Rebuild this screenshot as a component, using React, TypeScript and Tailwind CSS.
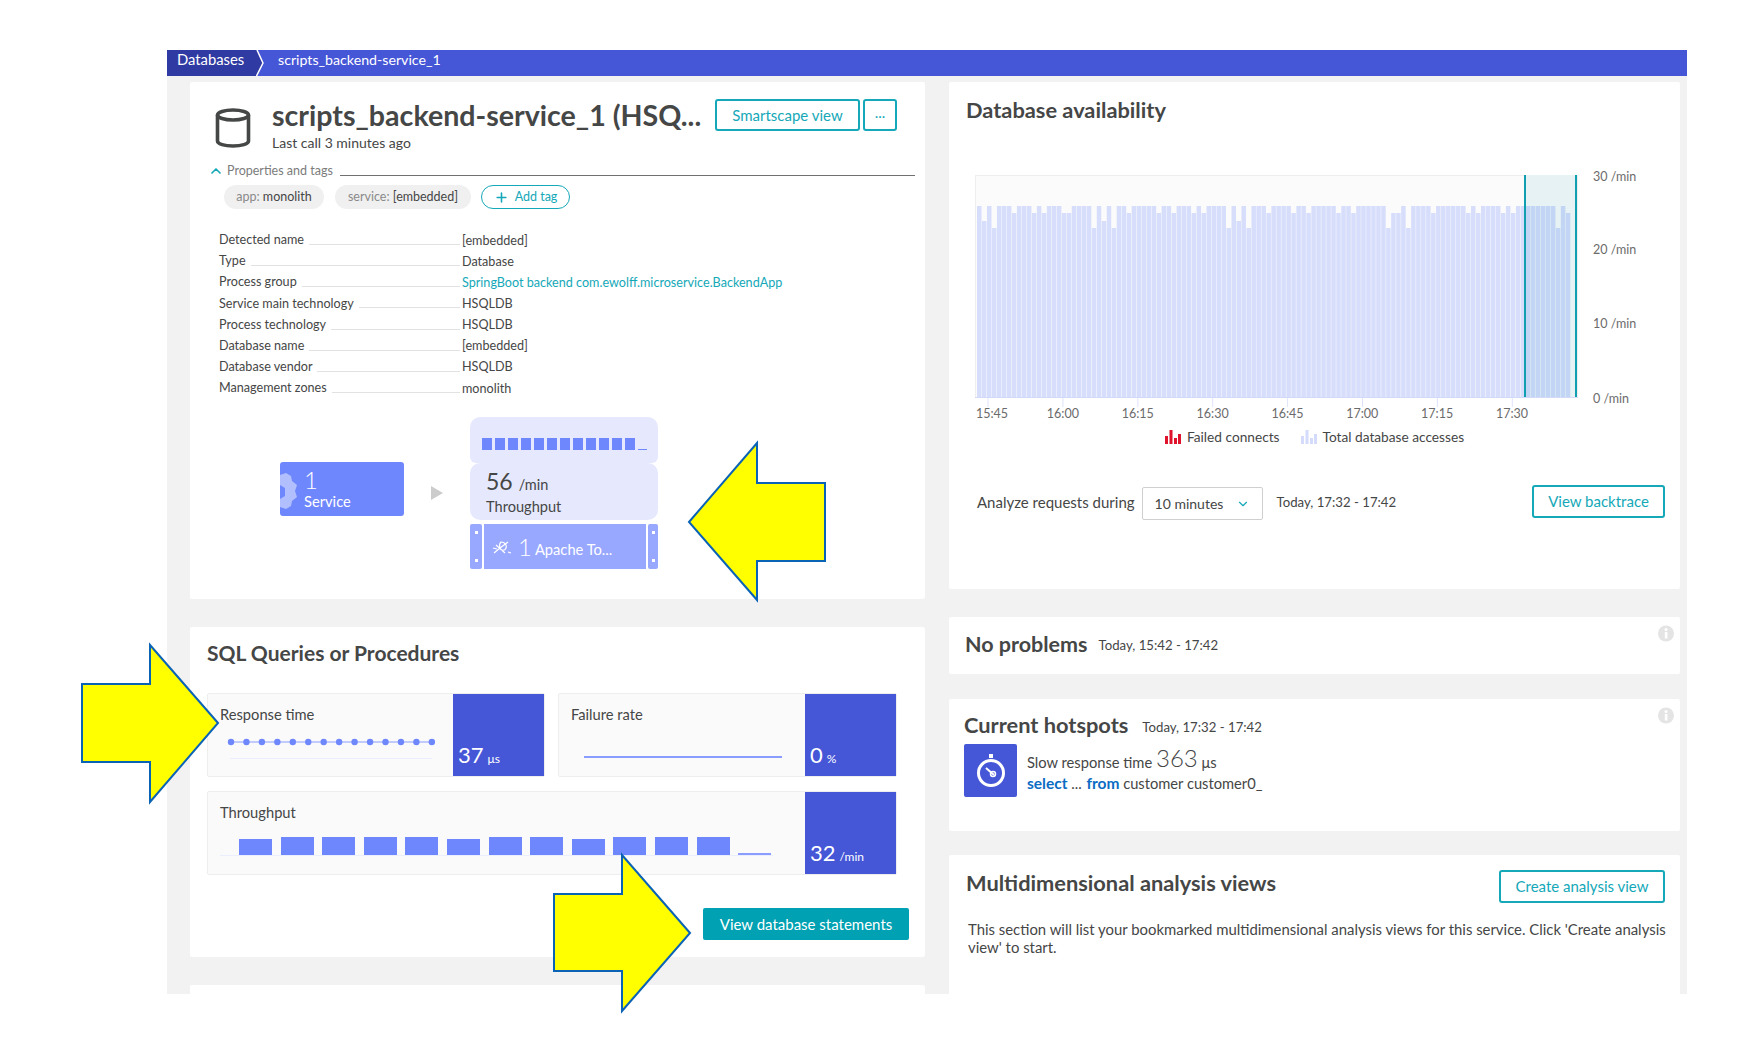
import React from "react";
import { ChevronDown, ChevronUp, Plus } from "lucide-react";

const font = "font-['Lato','Liberation_Sans',sans-serif]";

// Bars that dip below the usual height: index -> top y offset
const dips: Record<number, number> = {
    1: 15, 3: 22, 7: 7, 11: 7, 13: 7, 17: 7, 18: 7, 23: 22, 25: 15, 27: 22, 30: 7, 36: 7, 39: 7,
    43: 7, 45: 7, 50: 22, 52: 15, 54: 22, 58: 7, 63: 7, 66: 7, 72: 7, 75: 7, 82: 22, 83: 7, 84: 7,
    86: 22, 91: 7, 98: 7, 100: 7, 105: 7, 107: 7, 116: 22, 118: 7,
};

const properties: [string, string, boolean?][] = [
    ["Detected name", "[embedded]"],
    ["Type", "Database"],
    ["Process group", "SpringBoot backend com.ewolff.microservice.BackendApp", true],
    ["Service main technology", "HSQLDB"],
    ["Process technology", "HSQLDB"],
    ["Database name", "[embedded]"],
    ["Database vendor", "HSQLDB"],
    ["Management zones", "monolith"],
];

const Arrow = ({ points, box }: { points: string; box: string }) => (
    <svg className={box} viewBox="0 0 1745 1062" width={1745} height={1062}>
        <polygon points={points} fill="#ffff00" stroke="#0b63b5" strokeWidth={2} />
    </svg>
);

const OutlineButton = ({ children, className }: { children: React.ReactNode; className: string }) => (
    <button className={`border-2 border-[#14a8b8] rounded-[3px] text-[#14a8b8] text-[15px] bg-white flex items-center justify-center ${className}`}>
        {children}
    </button>
);

const Tile = ({ label, value, unit, className, children }: {
    label: string; value: string; unit: string; className: string; children: React.ReactNode;
}) => (
    <div className={`h-[84px] flex bg-[#fafafa] border border-[#eeeeee] rounded-[2px] ${className}`}>
        <div className="flex-1 pl-[12px] pt-[11px] relative">
            <div className="text-[14.7px] leading-[18px] text-[#454646]">{label}</div>
            {children}
        </div>
        <div className="w-[91px] bg-[#4556d7] text-white pl-[5px] flex items-end pb-[5px]">
            <span className="text-[22px] leading-[32px]">{value}</span>
            <span className="text-[12px] ml-[4px] leading-[24px]">{unit}</span>
        </div>
    </div>
);

const InfoIcon = () => (
    <svg width="16" height="17" viewBox="0 0 16 17" className="absolute right-[6px] top-[8px]">
        <circle cx="8" cy="8.5" r="8" fill="#e4e4e4" />
        <rect x="6.8" y="7" width="2.6" height="6.5" fill="#fff" />
        <circle cx="8" cy="4.6" r="1.5" fill="#fff" />
    </svg>
);

const AvailabilityChart = () => {
    const ticks = ["15:45", "16:00", "16:15", "16:30", "16:45", "17:00", "17:15", "17:30"];
    return (
        <svg width="700" height="290" viewBox="0 -8 700 290" className="block">
            <rect x="10.5" y="0.5" width="602" height="222" fill="#fbfbfb" stroke="#eeeeee" />
            <rect x="559" y="0" width="52" height="222" fill="#e6f2f3" />
            {Array.from({ length: 119 }, (_, i) => {
                const x = 12 + i * 4.99;
                const top = 31 + (dips[i] ?? 0);
                return <rect key={i} x={x} y={top} width={4.5} height={222 - top} fill={x > 559 ? "#c2d5f5" : "#d7defc"} />;
            })}
            <rect x="559" y="0" width="2" height="222" fill="#0f9fb0" />
            <rect x="610" y="0" width="2" height="222" fill="#0f9fb0" />
            <line x1="10" y1="222.5" x2="613" y2="222.5" stroke="#d3daf7" />
            {ticks.map((t, i) => (
                <g key={t}>
                    <line x1={23 + i * 74.9} y1="223" x2={23 + i * 74.9} y2="232" stroke="#dfe4fa" />
                    <text x={i === 0 ? 11 : 7 + i * 74.85} y="243" fontSize="12.5" fill="#6b6b6b">{t}</text>
                </g>
            ))}
            {[["30", 6], ["20", 79], ["10", 153], ["0", 228]].map(([v, y]) => (
                <text key={v} x="628" y={y} fontSize="12.5" fill="#6b6b6b">{v} /min</text>
            ))}
        </svg>
    );
};

const LegendBars = ({ color }: { color: string }) => (
    <svg width="16" height="14" viewBox="0 0 16 14">
        <rect x="0" y="6" width="3" height="8" fill={color} />
        <rect x="4.5" y="0" width="3" height="14" fill={color} />
        <rect x="9" y="8" width="3" height="6" fill={color} />
        <rect x="13" y="4" width="3" height="10" fill={color} />
    </svg>
);

export default function App() {
    return (
        <div className={`relative w-[1745px] h-[1062px] bg-white overflow-hidden pt-[50px] pl-[167px] text-[#454646] ${font}`}>
            <div className="w-[1520px] h-[944px] bg-[#f2f2f2] overflow-hidden">
                {/* breadcrumb */}
                <div className="h-[26px] bg-[#4556d7] flex items-start text-white relative">
                    <div className="h-full w-[96px] bg-[#2f3aa3] pl-[10px] text-[14.8px] leading-[19px] [clip-path:polygon(0_0,90px_0,96px_50%,89px_100%,0_100%)]">Databases</div>
                    <svg width="10" height="26" viewBox="0 0 10 26" className="absolute left-[89px] top-0">
                        <path d="M1 0L7 13L0.5 26" fill="none" stroke="#fff" strokeWidth="1.5" />
                    </svg>
                    <span className="ml-[15px] text-[14.2px] leading-[19px]">scripts_backend-service_1</span>
                </div>

                <div className="flex gap-[24px] pl-[23px] pt-[6px]">
                    {/* left column */}
                    <div className="w-[735px] flex flex-col gap-[28px]">
                        <div className="h-[517px] bg-white rounded-[2px] pt-[17px]">
                            <div className="h-[62px] flex items-start">
                                <svg width="36" height="40" viewBox="0 0 36 40" className="ml-[25px] mt-[9px]" fill="none" stroke="#454646" strokeWidth="3.6">
                                    <ellipse cx="18" cy="7" rx="15.5" ry="5" />
                                    <path d="M2.5 7v26c0 3 7 5 15.5 5s15.5-2 15.5-5V7" />
                                </svg>
                                <div className="ml-[21px] w-[443px]">
                                    <div className="text-[28.6px] leading-[32px] font-bold whitespace-nowrap">scripts_backend-service_1 (HSQ...</div>
                                    <div className="text-[14px] leading-[20px] mt-[2px]">Last call 3 minutes ago</div>
                                </div>
                                <OutlineButton className="w-[145px] h-[32px] border">Smartscape view</OutlineButton>
                                <OutlineButton className="w-[34px] h-[32px] ml-[3px] border text-[11px] pb-[5px]">...</OutlineButton>
                            </div>
                            <div className="h-[20px] flex items-center ml-[18px] mr-[10px]">
                                <ChevronUp size={16} strokeWidth={2.5} className="text-[#14a8b8]" />
                                <span className="ml-[3px] text-[12.5px] text-[#7c7c7c]">Properties and tags</span>
                                <div className="flex-1 h-px bg-[#707070] ml-[7px] mt-[8px]" />
                            </div>
                            <div className="flex items-center mt-[4px] ml-[34px] h-[24px] text-[12.5px]">
                                <span className="h-[24px] w-[100px] rounded-full bg-[#f0f0f0] flex items-center justify-center"><span className="text-[#8a8a8a]">app:&nbsp;</span>monolith</span>
                                <span className="h-[24px] w-[136px] ml-[11px] rounded-full bg-[#f0f0f0] flex items-center justify-center"><span className="text-[#8a8a8a]">service:&nbsp;</span>[embedded]</span>
                                <span className="h-[24px] w-[89px] ml-[10px] rounded-full border border-[#14a8b8] flex items-center justify-center text-[#14a8b8]">
                                    <Plus size={15} strokeWidth={2.5} className="mr-[6px]" />Add tag
                                </span>
                            </div>
                            <div className="mt-[21px] ml-[29px] text-[12.6px]">
                                {properties.map(([k, v, link]) => (
                                    <div key={k} className="h-[21.15px] flex items-center w-[640px]">
                                        <div className="w-[243px] flex items-center pr-[2px]">
                                            <span className="whitespace-nowrap">{k}</span>
                                            <div className="flex-1 h-px bg-[#e2e2e2] ml-[5px] mt-[8px]" />
                                        </div>
                                        <span className={link ? "text-[#14a8b8] mt-[1px]" : "mt-[1px]"}>{v}</span>
                                    </div>
                                ))}
                            </div>
                            {/* mini topology */}
                            <div className="flex items-center ml-[90px] mt-[18px]">
                                <div className="w-[124px] h-[54px] mb-[9px] rounded-[3px] bg-[#6f87fd] text-white pl-[24px] flex flex-col justify-center overflow-hidden relative">
                                    <svg width="18" height="36" viewBox="0 0 18 36" className="absolute left-0 top-[11px]">
                                        <path d="M0 2l6-2 5 3 1 5 5 4-2 6 2 6-5 4-1 5-5 3-6-2v-8l5-3v-8l-5-3z" fill="#b2bfff" />
                                    </svg>
                                    <span className="text-[24px] leading-[24px] font-light">1</span>
                                    <span className="text-[14.7px] leading-[18px]">Service</span>
                                </div>
                                <svg width="12" height="14" viewBox="0 0 12 14" className="ml-[27px] mr-[27px]">
                                    <polygon points="0,0 12,7 0,14" fill="#cccccc" />
                                </svg>
                                <div className="w-[188px]">
                                    <div className="h-[46px] bg-[#e6e9fd] rounded-t-[10px] rounded-b-[6px] flex items-end gap-[3px] pl-[12px] pb-[13px]">
                                        {Array.from({ length: 12 }, (_, i) => (
                                            <div key={i} className="w-[10px] h-[12px] bg-[#6f87fd]" />
                                        ))}
                                        <div className="w-[9px] h-px bg-[#6f87fd]" />
                                    </div>
                                    <div className="h-[57px] bg-[#e6e9fd] rounded-[10px] pl-[16px] pt-[5px]">
                                        <div className="leading-[27px]"><span className="text-[23px]">56</span><span className="text-[14.5px] ml-[6px]">/min</span></div>
                                        <div className="text-[14.6px] leading-[18px]">Throughput</div>
                                    </div>
                                    <div className="h-[45px] mt-[4px] flex gap-[2px] text-white">
                                        <div className="w-[12px] rounded-[2px] bg-[#98a8ff] flex flex-col justify-between items-center py-[7px]">
                                            <i className="w-[3px] h-[3px] bg-white" /><i className="w-[3px] h-[3px] bg-white" />
                                        </div>
                                        <div className="flex-1 bg-[#98a8ff] flex items-center pl-[8px]">
                                            <svg width="20" height="16" viewBox="0 0 20 16" fill="none" stroke="#fff" strokeWidth="1.2">
                                                <path d="M2 14l6-5 8-6M4 6l9 8M9 3c4 0 6 3 5 6s-5 3-6 0 0-5 1-6zM16 13l3 1M1 9l4 1" />
                                            </svg>
                                            <span className="text-[24px] font-light ml-[6px] leading-[28px]">1</span>
                                            <span className="text-[14.7px] ml-[3px] mt-[4px]">Apache To...</span>
                                        </div>
                                        <div className="w-[10px] rounded-[2px] bg-[#98a8ff] flex flex-col justify-between items-center py-[7px]">
                                            <i className="w-[3px] h-[3px] bg-white" /><i className="w-[3px] h-[3px] bg-white" />
                                        </div>
                                    </div>
                                </div>
                            </div>
                        </div>

                        <div className="h-[330px] bg-white rounded-[2px] px-[17px] pt-[11px]">
                            <h2 className="text-[21px] leading-[30px] font-bold">SQL Queries or Procedures</h2>
                            <div className="flex mt-[25px] gap-[13px] w-[690px]">
                                <Tile label="Response time" value="37" unit="μs" className="w-[338px]">
                                    <svg width="220" height="30" viewBox="0 0 220 30" className="absolute left-[14px] top-[35px]">
                                        <line x1="8" y1="13" x2="210" y2="13" stroke="#8a9cff" strokeWidth="1.2" />
                                        {Array.from({ length: 14 }, (_, i) => (
                                            <circle key={i} cx={9 + i * 15.45} cy="13" r="3.2" fill="#6f87fd" />
                                        ))}
                                        <line x1="8" y1="29.5" x2="210" y2="29.5" stroke="#ebeefd" />
                                    </svg>
                                </Tile>
                                <Tile label="Failure rate" value="0" unit="%" className="w-[339px]">
                                    <div className="absolute left-[25px] top-[62px] w-[198px] h-[2px] bg-[#8a9cff]" />
                                </Tile>
                            </div>
                            <Tile label="Throughput" value="32" unit="/min" className="w-[690px] mt-[14px]">
                                <div className="absolute left-[12px] top-[44px] w-[553px] pl-[19px] h-[20px] flex items-end border-b border-[#ebeefd]">
                                    {[16, 18, 18, 18, 18, 16, 18, 18, 16, 18, 18, 18].map((h, i) => (
                                        <div key={i} className="w-[33px] mr-[8.6px] bg-[#6f87fd]" style={{ height: h }} />
                                    ))}
                                    <div className="w-[33px] h-[2px] bg-[#8a9cff]" />
                                </div>
                            </Tile>
                            <div className="flex justify-end mt-[33px] -mr-[2px]">
                                <button className="w-[206px] h-[32px] bg-[#00a1b2] rounded-[2px] text-white text-[15px] mr-[1px]">View database statements</button>
                            </div>
                        </div>
                        <div className="h-[40px] bg-white rounded-[2px]" />
                    </div>

                    {/* right column */}
                    <div className="w-[731px] flex flex-col">
                        <div className="h-[507px] bg-white rounded-[2px] pt-[13px]">
                            <h2 className="text-[21.8px] leading-[30px] font-bold ml-[17px]">Database availability</h2>
                            <div className="ml-[16px] mt-[42px]"><AvailabilityChart /></div>
                            <div className="flex items-center text-[13.7px] h-[18px] -mt-[29px] ml-[216px] relative">
                                <LegendBars color="#e0132c" />
                                <span className="ml-[6px]">Failed connects</span>
                                <span className="ml-[21px]"><LegendBars color="#d5dcfb" /></span>
                                <span className="ml-[6px]">Total database accesses</span>
                            </div>
                            <div className="flex items-center mt-[39px] ml-[28px] mr-[15px] h-[35px] text-[15px]">
                                <span>Analyze requests during</span>
                                <div className="ml-[7px] w-[121px] h-[33px] mt-[2px] border border-[#cfcfcf] rounded-[2px] flex items-center pl-[12px] justify-between pr-[12px] text-[14px]">
                                    10 minutes
                                    <ChevronDown size={14} strokeWidth={2} className="text-[#14a8b8]" />
                                </div>
                                <span className="ml-[14px] text-[13.2px]">Today, 17:32 - 17:42</span>
                                <OutlineButton className="ml-auto w-[133px] h-[33px] border -mt-[2px]">View backtrace</OutlineButton>
                            </div>
                        </div>

                        <div className="h-[57px] mt-[28px] bg-white rounded-[2px] relative flex items-center pl-[16px] pb-[3px]">
                            <h2 className="text-[21.5px] font-bold">No problems</h2>
                            <span className="text-[13.2px] ml-[11px] mt-[4px]">Today, 15:42 - 17:42</span>
                            <InfoIcon />
                        </div>

                        <div className="h-[132px] mt-[25px] bg-white rounded-[2px] relative pl-[15px] pt-[11px]">
                            <InfoIcon />
                            <div className="flex items-center h-[30px]">
                                <h2 className="text-[21.8px] font-bold">Current hotspots</h2>
                                <span className="text-[13.2px] ml-[14px] mt-[5px]">Today, 17:32 - 17:42</span>
                            </div>
                            <div className="flex mt-[4px]">
                                <div className="w-[53px] h-[53px] bg-[#4556d7] rounded-[2px] flex items-center justify-center">
                                    <svg width="30" height="34" viewBox="0 0 30 34" fill="none" stroke="#fff">
                                        <rect x="13" y="0" width="4" height="4" fill="#fff" stroke="none" />
                                        <circle cx="15" cy="19" r="12.5" strokeWidth="3" />
                                        <path d="M10 14l8 7" strokeWidth="2" />
                                        <circle cx="17" cy="20" r="2.5" strokeWidth="1.5" />
                                    </svg>
                                </div>
                                <div className="ml-[10px] text-[14.7px]">
                                    <div className="h-[28px] flex items-end leading-[20px] whitespace-pre">
                                        Slow response time <span className="text-[24px] font-light leading-[28px]">363</span> μs
                                    </div>
                                    <div className="mt-[0px]"><b className="text-[#0c6cc4] text-[15.5px]">select</b> ... <b className="text-[#0c6cc4] ml-[1px] text-[15.5px]">from</b> customer customer0_</div>
                                </div>
                            </div>
                        </div>

                        <div className="h-[200px] mt-[24px] bg-white rounded-[2px] pt-[14px] pl-[17px] pr-[15px]">
                            <div className="flex items-start justify-between">
                                <h2 className="text-[21.8px] leading-[30px] font-bold mt-[-1px]">Multidimensional analysis views</h2>
                                <OutlineButton className="w-[166px] h-[33px] border mt-[1px]">Create analysis view</OutlineButton>
                            </div>
                            <p className="text-[14.9px] leading-[18px] ml-[2px] mt-[17px] w-[706px]">
                                This section will list your bookmarked multidimensional analysis views for this service. Click 'Create analysis view' to start.
                            </p>
                        </div>
                    </div>
                </div>
            </div>

            {/* yellow callout arrows sit over the page */}
            <Arrow box="absolute left-0 top-0" points="689,522 757,443 757,483 825,483 825,561 757,561 757,600" />
            <Arrow box="absolute left-0 top-0" points="218,723 150,645 150,684 82,684 82,762 150,762 150,802" />
            <Arrow box="absolute left-0 top-0" points="690,933 622,855 622,894 554,894 554,971 622,971 622,1011" />
        </div>
    );
}
